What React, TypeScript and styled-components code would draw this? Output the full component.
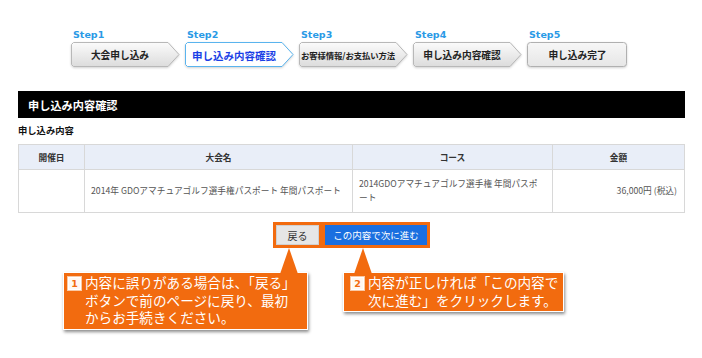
import React from 'react';
import styled, { createGlobalStyle } from 'styled-components';

const orange = '#f26b0f';

const GlobalStyle = createGlobalStyle`
  body {
    margin: 0;
    background: #fff;
    font-family: "Noto Sans CJK JP", "Noto Sans", sans-serif;
  }
`;

const Page = styled.div`
  width: 702px;
  height: 358px;
  overflow: hidden;
`;

const StepsRow = styled.div`
  display: flex;
  gap: 5px;
  padding: 29px 0 0 71px;
`;

const Step = styled.div<{ $width: number }>`
  display: flex;
  flex-direction: column;
  width: ${p => p.$width}px;
`;

const StepLabel = styled.div`
  font-family: "DejaVu Sans", Verdana, sans-serif;
  font-weight: bold;
  font-size: 9.5px;
  line-height: 12px;
  height: 13px;
  padding-left: 2px;
  color: #2a9ae6;
`;

const StepBox = styled.div<{ $active?: boolean; $tip?: boolean }>`
  position: relative;
  height: 26px;
  display: flex;
  align-items: center;
  justify-content: center;
  padding-right: ${p => (p.$tip ? 11 : 0)}px;
  font-weight: bold;
  font-size: ${p => (p.$active ? 10.5 : 9.7)}px;
  color: ${p => (p.$active ? '#1b3fe6' : '#222')};
  white-space: nowrap;

  svg {
    position: absolute;
    inset: 0;
    z-index: 0;
    filter: drop-shadow(0 1px 1px rgba(0, 0, 0, 0.18));
  }
`;

const StepText = styled.span<{ $small?: boolean }>`
  position: relative;
  z-index: 1;
  font-size: ${p => (p.$small ? '8.4px' : 'inherit')};
  letter-spacing: ${p => (p.$small ? '-0.1px' : '0')};
`;

const Content = styled.div`
  padding: 0 17px 0 18px;
  margin-top: 23px;
`;

const SectionBar = styled.div`
  background: #000;
  color: #fff;
  height: 27px;
  display: flex;
  align-items: center;
  padding-left: 10px;
  font-weight: bold;
  font-size: 11.2px;
`;

const SubTitle = styled.div`
  font-weight: bold;
  font-size: 9.3px;
  color: #111;
  margin: 6px 0 7px;
  line-height: 13px;
`;

const Table = styled.table`
  width: 100%;
  border-collapse: collapse;
  table-layout: fixed;
  font-size: 8.7px;
`;

const Th = styled.th<{ $width?: number }>`
  width: ${p => (p.$width ? `${p.$width}px` : 'auto')};
  height: 24px;
  background: #e9eef8;
  border: 1px solid #d8d8d8;
  font-weight: bold;
  color: #333;
  padding: 0;
`;

const Td = styled.td<{ $align?: string; $padRight?: number }>`
  height: 42px;
  border: 1px solid #d8d8d8;
  color: #555;
  text-align: ${p => p.$align || 'left'};
  padding: 0 ${p => p.$padRight ?? 7}px 0 6px;
  line-height: 14px;
  vertical-align: middle;
`;

const Buttons = styled.div`
  display: flex;
  justify-content: center;
  margin-top: 9px;
  padding-left: 1px;
`;

const Highlight = styled.div`
  border: 3px solid ${orange};
  display: flex;
`;

const Button = styled.button<{ $primary?: boolean; $width: number }>`
  width: ${p => p.$width}px;
  height: 20px;
  margin: 0;
  padding: 0;
  font-family: inherit;
  font-size: ${p => (p.$primary ? 9.5 : 10)}px;
  background: ${p => (p.$primary ? '#1a6fe0' : '#e6e6e6')};
  color: ${p => (p.$primary ? '#fff' : '#333')};
  border: 1px solid ${p => (p.$primary ? '#1a6fe0' : '#d0d0d0')};
`;

const Callouts = styled.div`
  display: flex;
  align-items: flex-start;
  gap: 35px;
  padding-left: 63px;
  margin-top: 24px;
`;

const Callout = styled.div<{ $width: number; $pad: number }>`
  position: relative;
  width: ${p => p.$width}px;
  box-sizing: border-box;
  display: flex;
  align-items: flex-start;
  gap: 4px;
  padding: 1px 4px 2px ${p => p.$pad}px;
  background: ${orange};
  border: 1px solid #fff;
  box-shadow: 1px 2px 3px rgba(0, 0, 0, 0.45);
  color: #fff;
  font-size: 13.6px;
  line-height: 17.5px;
`;

const Pointer = styled.div<{ $left: number }>`
  position: absolute;
  top: -25px;
  left: ${p => p.$left}px;
  width: 0;
  height: 0;
  border-left: 9px solid transparent;
  border-right: 9px solid transparent;
  border-bottom: 26px solid ${orange};
`;

const Badge = styled.span`
  flex: none;
  width: 11px;
  height: 11px;
  margin-top: 3px;
  border: 1px solid #fff;
  background: #fff8f2;
  color: ${orange};
  font-family: "DejaVu Sans", sans-serif;
  font-weight: bold;
  font-size: 9.5px;
  line-height: 11px;
  text-align: center;
  outline: 1px solid #f9c9a6;
`;

const CalloutText = styled.div`
  white-space: nowrap;
`;

const arrowPoints = '0.5,2.5 2.5,0.5 97,0.5 108,12.5 97,24.5 2.5,24.5 0.5,22.5';

const StepShape = ({ active, tip }: { active?: boolean; tip: boolean }) => (
  <svg width={tip ? 109 : 101} height={26} viewBox={`0 0 ${tip ? 109 : 101} 26`}>
    <defs>
      <linearGradient id="stepFill" x1="0" y1="0" x2="0" y2="1">
        <stop offset="0" stopColor="#fbfbfb" />
        <stop offset="1" stopColor="#dcdcdc" />
      </linearGradient>
      <linearGradient id="lastFill" x1="0" y1="0" x2="0" y2="1">
        <stop offset="0" stopColor="#f7f7f7" />
        <stop offset="1" stopColor="#e6e6e6" />
      </linearGradient>
    </defs>
    {tip ? (
      <polygon
        points={arrowPoints}
        fill={active ? '#fff' : 'url(#stepFill)'}
        stroke={active ? '#5ab4ee' : '#b8b8b8'}
        strokeWidth={1}
      />
    ) : (
      <rect x={0.5} y={0.5} width={99} height={24} rx={3} fill="url(#lastFill)" stroke="#b0b0b0" />
    )}
  </svg>
);

const steps = [
  { label: 'Step1', text: '大会申し込み' },
  { label: 'Step2', text: '申し込み内容確認', active: true },
  { label: 'Step3', text: 'お客様情報/お支払い方法', small: true },
  { label: 'Step4', text: '申し込み内容確認' },
  { label: 'Step5', text: '申し込み完了', last: true },
];

export default function App() {
  return (
    <Page>
      <GlobalStyle />
      <StepsRow>
        {steps.map(s => (
          <Step key={s.label} $width={s.last ? 101 : 109}>
            <StepLabel>{s.label}</StepLabel>
            <StepBox $active={s.active} $tip={!s.last}>
              <StepShape active={s.active} tip={!s.last} />
              <StepText $small={s.small}>{s.text}</StepText>
            </StepBox>
          </Step>
        ))}
      </StepsRow>

      <Content>
        <SectionBar>申し込み内容確認</SectionBar>
        <SubTitle>申し込み内容</SubTitle>
        <Table>
          <thead>
            <tr>
              <Th $width={65}>開催日</Th>
              <Th $width={267}>大会名</Th>
              <Th $width={199}>コース</Th>
              <Th>金額</Th>
            </tr>
          </thead>
          <tbody>
            <tr>
              <Td />
              <Td>2014年 GDOアマチュアゴルフ選手権パスポート 年間パスポート</Td>
              <Td $padRight={10}>2014GDOアマチュアゴルフ選手権 年間パスポート</Td>
              <Td $align="right">36,000円 (税込)</Td>
            </tr>
          </tbody>
        </Table>
      </Content>

      <Buttons>
        <Highlight>
          <Button $width={43}>戻る</Button>
        </Highlight>
        <Highlight>
          <Button $primary $width={102}>この内容で次に進む</Button>
        </Highlight>
      </Buttons>

      <Callouts>
        <Callout $width={245} $pad={4}>
          <Pointer $left={216} />
          <Badge>1</Badge>
          <CalloutText>
            内容に誤りがある場合は、「戻る」
            <br />
            ボタンで前のページに戻り、最初
            <br />
            からお手続きください。
          </CalloutText>
        </Callout>
        <Callout $width={221} $pad={7}>
          <Pointer $left={10} />
          <Badge>2</Badge>
          <CalloutText>
            内容が正しければ「この内容で
            <br />
            次に進む」をクリックします。
          </CalloutText>
        </Callout>
      </Callouts>
    </Page>
  );
}
